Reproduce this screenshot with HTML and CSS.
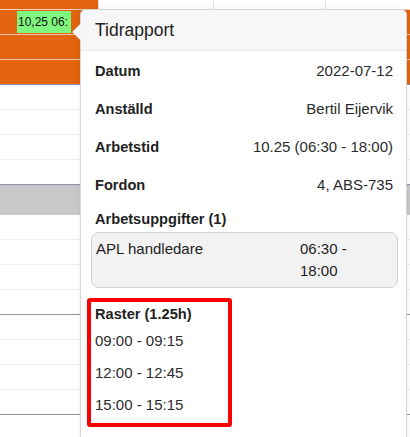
FILE: index.html
```html
<!DOCTYPE html>
<html lang="sv">
<head>
<meta charset="utf-8">
<title>Tidrapport</title>
<link rel="stylesheet" href="styles.css">
</head>
<body>
<div class="sheet">
  <div class="row-top">
    <div class="cell-orange-top"></div>
    <div class="col c1"></div>
    <div class="col c2"></div>
    <div class="col c3"></div>
  </div>
  <div class="row-orange"><span class="tag">10,25 06:</span></div>
  <div class="row-orange"></div>
  <div class="row-orange last"></div>
  <div class="row-white"></div>
  <div class="row-white"></div>
  <div class="row-white"></div>
  <div class="row-white group-end"></div>
  <div class="row-gray"></div>
  <div class="row-white"></div>
  <div class="row-white"></div>
  <div class="row-white"></div>
  <div class="row-white group-end"></div>
  <div class="row-white"></div>
  <div class="row-white"></div>
  <div class="row-white"></div>
  <div class="row-white group-end"></div>
  <div class="row-white tail"></div>
</div>

<div class="popover">
  <div class="pop-head">Tidrapport</div>
  <div class="pop-body">
    <div class="kv"><span class="label">Datum</span><span class="value">2022-07-12</span></div>
    <div class="kv"><span class="label">Anställd</span><span class="value">Bertil Eijervik</span></div>
    <div class="kv"><span class="label">Arbetstid</span><span class="value">10.25 (06:30 - 18:00)</span></div>
    <div class="kv kv-last"><span class="label">Fordon</span><span class="value">4, ABS-735</span></div>
    <div class="section-title">Arbetsuppgifter (1)</div>
    <div class="task">
      <span class="task-name">APL handledare</span>
      <span class="task-time">06:30 - 18:00</span>
    </div>
    <div class="raster">
      <div class="raster-title">Raster (1.25h)</div>
      <div class="raster-time first">09:00 - 09:15</div>
      <div class="raster-time">12:00 - 12:45</div>
      <div class="raster-time">15:00 - 15:15</div>
    </div>
  </div>
</div>
</body>
</html>
```
FILE: styles.css
```css
* { box-sizing: border-box; }
html, body { margin: 0; padding: 0; }
body {
  width: 410px;
  height: 437px;
  overflow: hidden;
  position: relative;
  background: #fff;
  font-family: "Liberation Sans", Arial, Helvetica, sans-serif;
  color: #1f1f1f;
}

/* background calendar grid */
.sheet { display: flex; flex-direction: column; }
.row-top { display: flex; height: 10px; border-bottom: 1px solid #f3d3bd; }
.cell-orange-top { width: 98px; background: #e2640f; }
.col { border-left: 1px solid #e2e2e2; }
.c1 { width: 115px; }
.c2 { width: 112px; }
.c3 { flex: 1; }
.row-orange {
  height: 25px;
  background: #e2640f;
  border-bottom: 1px solid #f0c4a5;
  padding-left: 17px;
  padding-top: 1px;
}
.row-orange.last { border-bottom: 1px solid #8a95a8; }
.tag {
  display: inline-block;
  height: 22px;
  line-height: 22px;
  padding: 0 3px 0 1px;
  background: #7ff77f;
  color: #111;
  font-size: 12px;
}
.row-white { height: 25px; border-bottom: 1px solid #ececec; }
.row-white.group-end { border-bottom: 1px solid #8a95a8; }
.row-white.tail { height: 17px; border-bottom: 0; }
.row-gray { height: 30px; background: #c8c8c8; }

/* popover overlay */
.popover {
  position: absolute;
  left: 80px;
  top: 9px;
  width: 327px;
  height: 428px;
  background: #fff;
  border: 1px solid #d6d6d6;
  border-bottom: 0;
  border-radius: 6px 6px 0 0;
  box-shadow: 0 1px 6px rgba(0, 0, 0, 0.08);
}
.popover::before,
.popover::after {
  content: "";
  position: absolute;
  top: 13px;
  border-style: solid;
  border-color: transparent;
}
.popover::before {
  left: -9px;
  border-width: 9px 9px 9px 0;
  border-right-color: #d6d6d6;
}
.popover::after {
  left: -8px;
  top: 14px;
  border-width: 8px 8px 8px 0;
  border-right-color: #f7f7f7;
}
.pop-head {
  height: 41px;
  padding: 0 14px;
  display: flex;
  align-items: center;
  background: #f7f7f7;
  border-bottom: 1px solid #e8e8e8;
  border-radius: 6px 6px 0 0;
  font-size: 17.5px;
  color: #222;
}
.pop-body { padding: 9px 13px 0 14px; font-size: 15px; }
.kv {
  display: flex;
  justify-content: space-between;
  line-height: 22px;
  margin-bottom: 16px;
}
.kv-last { margin-bottom: 12px; }
.label { font-weight: bold; font-size: 14.6px; color: #222; }
.value { color: #2b2b2b; }
.section-title {
  font-weight: bold;
  font-size: 14.6px;
  line-height: 22px;
  margin-bottom: 2px;
}
.task {
  display: grid;
  grid-template-columns: 204px 70px;
  margin: 0 -5px 0 -4px;
  padding: 5px 4px;
  line-height: 22px;
  background: #f2f2f2;
  border: 1px solid #d2d2d2;
  border-radius: 8px;
  color: #222;
}
.raster {
  width: 145px;
  margin: 10px 0 0 -8px;
  padding: 1px 4px 7px 4px;
  border: 4px solid #ff0000;
  border-radius: 3px;
}
.raster-title { font-weight: bold; font-size: 14.6px; line-height: 22px; }
.raster-time { line-height: 22px; margin-top: 10px; color: #2b2b2b; }
.raster-time.first { margin-top: 5px; }
```
